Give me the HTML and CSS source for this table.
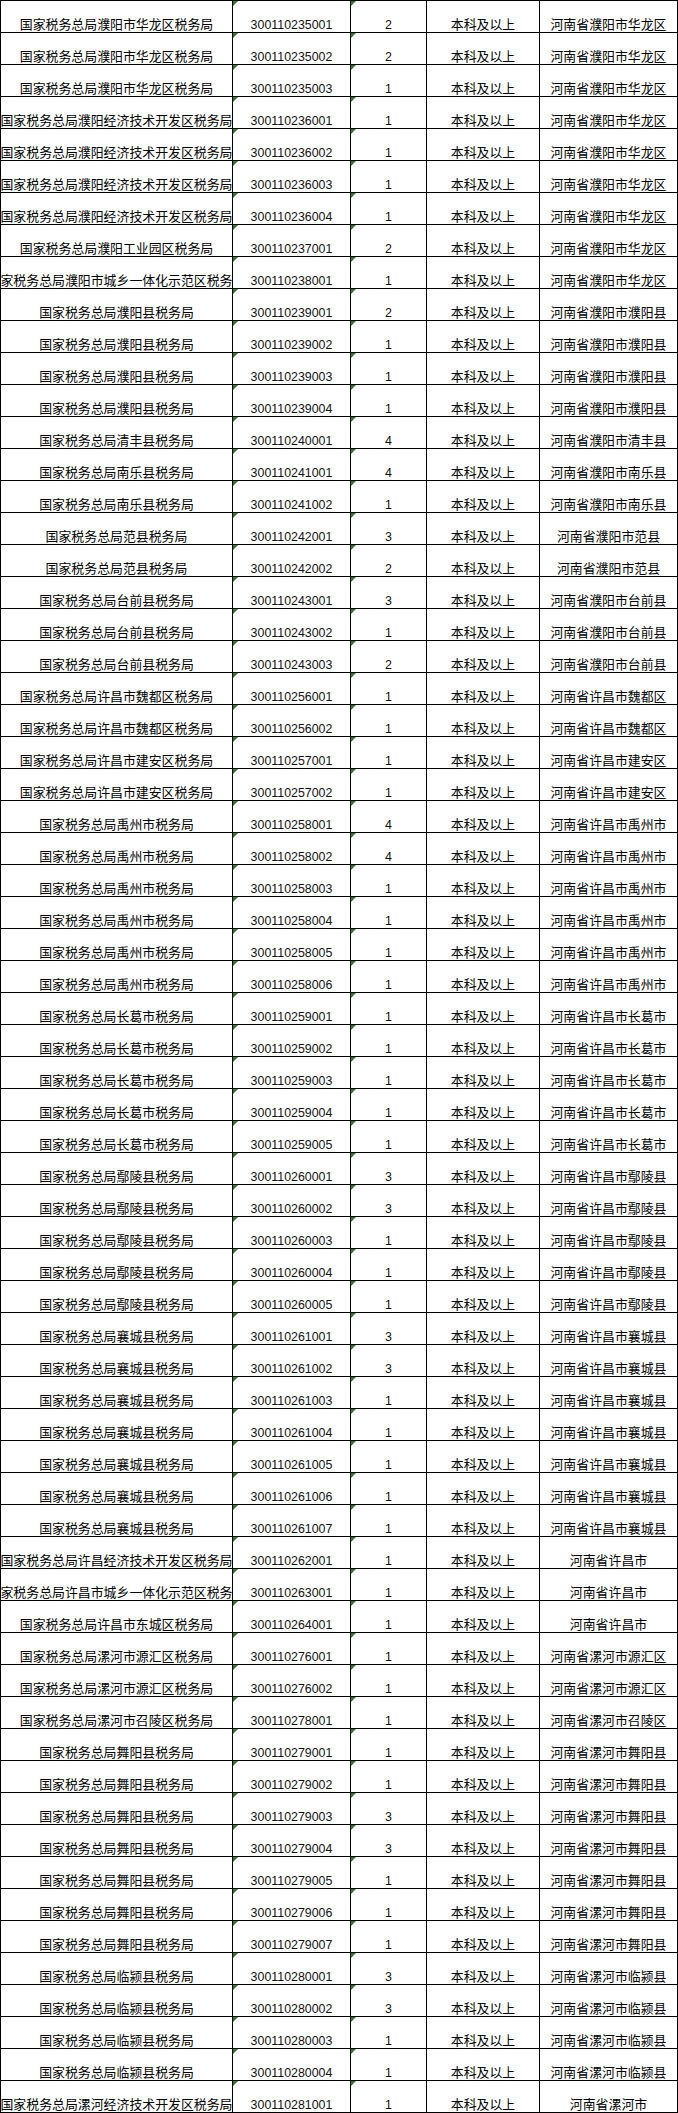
FILE: index.html
```html
<!DOCTYPE html>
<html lang="zh-CN">
<head>
<meta charset="utf-8">
<title>职位表</title>
<link rel="stylesheet" href="styles.css">
</head>
<body>
<div class="sheet">
<div class="c t">国家税务总局濮阳市华龙区税务局</div><div class="c n flag">300110235001</div><div class="c n flag">2</div><div class="c t">本科及以上</div><div class="c t">河南省濮阳市华龙区</div>
<div class="c t">国家税务总局濮阳市华龙区税务局</div><div class="c n flag">300110235002</div><div class="c n flag">2</div><div class="c t">本科及以上</div><div class="c t">河南省濮阳市华龙区</div>
<div class="c t">国家税务总局濮阳市华龙区税务局</div><div class="c n flag">300110235003</div><div class="c n flag">1</div><div class="c t">本科及以上</div><div class="c t">河南省濮阳市华龙区</div>
<div class="c t">国家税务总局濮阳经济技术开发区税务局</div><div class="c n flag">300110236001</div><div class="c n flag">1</div><div class="c t">本科及以上</div><div class="c t">河南省濮阳市华龙区</div>
<div class="c t">国家税务总局濮阳经济技术开发区税务局</div><div class="c n flag">300110236002</div><div class="c n flag">1</div><div class="c t">本科及以上</div><div class="c t">河南省濮阳市华龙区</div>
<div class="c t">国家税务总局濮阳经济技术开发区税务局</div><div class="c n flag">300110236003</div><div class="c n flag">1</div><div class="c t">本科及以上</div><div class="c t">河南省濮阳市华龙区</div>
<div class="c t">国家税务总局濮阳经济技术开发区税务局</div><div class="c n flag">300110236004</div><div class="c n flag">1</div><div class="c t">本科及以上</div><div class="c t">河南省濮阳市华龙区</div>
<div class="c t">国家税务总局濮阳工业园区税务局</div><div class="c n flag">300110237001</div><div class="c n flag">2</div><div class="c t">本科及以上</div><div class="c t">河南省濮阳市华龙区</div>
<div class="c t">国家税务总局濮阳市城乡一体化示范区税务局</div><div class="c n flag">300110238001</div><div class="c n flag">1</div><div class="c t">本科及以上</div><div class="c t">河南省濮阳市华龙区</div>
<div class="c t">国家税务总局濮阳县税务局</div><div class="c n flag">300110239001</div><div class="c n flag">2</div><div class="c t">本科及以上</div><div class="c t">河南省濮阳市濮阳县</div>
<div class="c t">国家税务总局濮阳县税务局</div><div class="c n flag">300110239002</div><div class="c n flag">1</div><div class="c t">本科及以上</div><div class="c t">河南省濮阳市濮阳县</div>
<div class="c t">国家税务总局濮阳县税务局</div><div class="c n flag">300110239003</div><div class="c n flag">1</div><div class="c t">本科及以上</div><div class="c t">河南省濮阳市濮阳县</div>
<div class="c t">国家税务总局濮阳县税务局</div><div class="c n flag">300110239004</div><div class="c n flag">1</div><div class="c t">本科及以上</div><div class="c t">河南省濮阳市濮阳县</div>
<div class="c t">国家税务总局清丰县税务局</div><div class="c n flag">300110240001</div><div class="c n flag">4</div><div class="c t">本科及以上</div><div class="c t">河南省濮阳市清丰县</div>
<div class="c t">国家税务总局南乐县税务局</div><div class="c n flag">300110241001</div><div class="c n flag">4</div><div class="c t">本科及以上</div><div class="c t">河南省濮阳市南乐县</div>
<div class="c t">国家税务总局南乐县税务局</div><div class="c n flag">300110241002</div><div class="c n flag">1</div><div class="c t">本科及以上</div><div class="c t">河南省濮阳市南乐县</div>
<div class="c t">国家税务总局范县税务局</div><div class="c n flag">300110242001</div><div class="c n flag">3</div><div class="c t">本科及以上</div><div class="c t">河南省濮阳市范县</div>
<div class="c t">国家税务总局范县税务局</div><div class="c n flag">300110242002</div><div class="c n flag">2</div><div class="c t">本科及以上</div><div class="c t">河南省濮阳市范县</div>
<div class="c t">国家税务总局台前县税务局</div><div class="c n flag">300110243001</div><div class="c n flag">3</div><div class="c t">本科及以上</div><div class="c t">河南省濮阳市台前县</div>
<div class="c t">国家税务总局台前县税务局</div><div class="c n flag">300110243002</div><div class="c n flag">1</div><div class="c t">本科及以上</div><div class="c t">河南省濮阳市台前县</div>
<div class="c t">国家税务总局台前县税务局</div><div class="c n flag">300110243003</div><div class="c n flag">2</div><div class="c t">本科及以上</div><div class="c t">河南省濮阳市台前县</div>
<div class="c t">国家税务总局许昌市魏都区税务局</div><div class="c n flag">300110256001</div><div class="c n flag">1</div><div class="c t">本科及以上</div><div class="c t">河南省许昌市魏都区</div>
<div class="c t">国家税务总局许昌市魏都区税务局</div><div class="c n flag">300110256002</div><div class="c n flag">1</div><div class="c t">本科及以上</div><div class="c t">河南省许昌市魏都区</div>
<div class="c t">国家税务总局许昌市建安区税务局</div><div class="c n flag">300110257001</div><div class="c n flag">1</div><div class="c t">本科及以上</div><div class="c t">河南省许昌市建安区</div>
<div class="c t">国家税务总局许昌市建安区税务局</div><div class="c n flag">300110257002</div><div class="c n flag">1</div><div class="c t">本科及以上</div><div class="c t">河南省许昌市建安区</div>
<div class="c t">国家税务总局禹州市税务局</div><div class="c n flag">300110258001</div><div class="c n flag">4</div><div class="c t">本科及以上</div><div class="c t">河南省许昌市禹州市</div>
<div class="c t">国家税务总局禹州市税务局</div><div class="c n flag">300110258002</div><div class="c n flag">4</div><div class="c t">本科及以上</div><div class="c t">河南省许昌市禹州市</div>
<div class="c t">国家税务总局禹州市税务局</div><div class="c n flag">300110258003</div><div class="c n flag">1</div><div class="c t">本科及以上</div><div class="c t">河南省许昌市禹州市</div>
<div class="c t">国家税务总局禹州市税务局</div><div class="c n flag">300110258004</div><div class="c n flag">1</div><div class="c t">本科及以上</div><div class="c t">河南省许昌市禹州市</div>
<div class="c t">国家税务总局禹州市税务局</div><div class="c n flag">300110258005</div><div class="c n flag">1</div><div class="c t">本科及以上</div><div class="c t">河南省许昌市禹州市</div>
<div class="c t">国家税务总局禹州市税务局</div><div class="c n flag">300110258006</div><div class="c n flag">1</div><div class="c t">本科及以上</div><div class="c t">河南省许昌市禹州市</div>
<div class="c t">国家税务总局长葛市税务局</div><div class="c n flag">300110259001</div><div class="c n flag">1</div><div class="c t">本科及以上</div><div class="c t">河南省许昌市长葛市</div>
<div class="c t">国家税务总局长葛市税务局</div><div class="c n flag">300110259002</div><div class="c n flag">1</div><div class="c t">本科及以上</div><div class="c t">河南省许昌市长葛市</div>
<div class="c t">国家税务总局长葛市税务局</div><div class="c n flag">300110259003</div><div class="c n flag">1</div><div class="c t">本科及以上</div><div class="c t">河南省许昌市长葛市</div>
<div class="c t">国家税务总局长葛市税务局</div><div class="c n flag">300110259004</div><div class="c n flag">1</div><div class="c t">本科及以上</div><div class="c t">河南省许昌市长葛市</div>
<div class="c t">国家税务总局长葛市税务局</div><div class="c n flag">300110259005</div><div class="c n flag">1</div><div class="c t">本科及以上</div><div class="c t">河南省许昌市长葛市</div>
<div class="c t">国家税务总局鄢陵县税务局</div><div class="c n flag">300110260001</div><div class="c n flag">3</div><div class="c t">本科及以上</div><div class="c t">河南省许昌市鄢陵县</div>
<div class="c t">国家税务总局鄢陵县税务局</div><div class="c n flag">300110260002</div><div class="c n flag">3</div><div class="c t">本科及以上</div><div class="c t">河南省许昌市鄢陵县</div>
<div class="c t">国家税务总局鄢陵县税务局</div><div class="c n flag">300110260003</div><div class="c n flag">1</div><div class="c t">本科及以上</div><div class="c t">河南省许昌市鄢陵县</div>
<div class="c t">国家税务总局鄢陵县税务局</div><div class="c n flag">300110260004</div><div class="c n flag">1</div><div class="c t">本科及以上</div><div class="c t">河南省许昌市鄢陵县</div>
<div class="c t">国家税务总局鄢陵县税务局</div><div class="c n flag">300110260005</div><div class="c n flag">1</div><div class="c t">本科及以上</div><div class="c t">河南省许昌市鄢陵县</div>
<div class="c t">国家税务总局襄城县税务局</div><div class="c n flag">300110261001</div><div class="c n flag">3</div><div class="c t">本科及以上</div><div class="c t">河南省许昌市襄城县</div>
<div class="c t">国家税务总局襄城县税务局</div><div class="c n flag">300110261002</div><div class="c n flag">3</div><div class="c t">本科及以上</div><div class="c t">河南省许昌市襄城县</div>
<div class="c t">国家税务总局襄城县税务局</div><div class="c n flag">300110261003</div><div class="c n flag">1</div><div class="c t">本科及以上</div><div class="c t">河南省许昌市襄城县</div>
<div class="c t">国家税务总局襄城县税务局</div><div class="c n flag">300110261004</div><div class="c n flag">1</div><div class="c t">本科及以上</div><div class="c t">河南省许昌市襄城县</div>
<div class="c t">国家税务总局襄城县税务局</div><div class="c n flag">300110261005</div><div class="c n flag">1</div><div class="c t">本科及以上</div><div class="c t">河南省许昌市襄城县</div>
<div class="c t">国家税务总局襄城县税务局</div><div class="c n flag">300110261006</div><div class="c n flag">1</div><div class="c t">本科及以上</div><div class="c t">河南省许昌市襄城县</div>
<div class="c t">国家税务总局襄城县税务局</div><div class="c n flag">300110261007</div><div class="c n flag">1</div><div class="c t">本科及以上</div><div class="c t">河南省许昌市襄城县</div>
<div class="c t">国家税务总局许昌经济技术开发区税务局</div><div class="c n flag">300110262001</div><div class="c n flag">1</div><div class="c t">本科及以上</div><div class="c t">河南省许昌市</div>
<div class="c t">国家税务总局许昌市城乡一体化示范区税务局</div><div class="c n flag">300110263001</div><div class="c n flag">1</div><div class="c t">本科及以上</div><div class="c t">河南省许昌市</div>
<div class="c t">国家税务总局许昌市东城区税务局</div><div class="c n flag">300110264001</div><div class="c n flag">1</div><div class="c t">本科及以上</div><div class="c t">河南省许昌市</div>
<div class="c t">国家税务总局漯河市源汇区税务局</div><div class="c n flag">300110276001</div><div class="c n flag">1</div><div class="c t">本科及以上</div><div class="c t">河南省漯河市源汇区</div>
<div class="c t">国家税务总局漯河市源汇区税务局</div><div class="c n flag">300110276002</div><div class="c n flag">1</div><div class="c t">本科及以上</div><div class="c t">河南省漯河市源汇区</div>
<div class="c t">国家税务总局漯河市召陵区税务局</div><div class="c n flag">300110278001</div><div class="c n flag">1</div><div class="c t">本科及以上</div><div class="c t">河南省漯河市召陵区</div>
<div class="c t">国家税务总局舞阳县税务局</div><div class="c n flag">300110279001</div><div class="c n flag">1</div><div class="c t">本科及以上</div><div class="c t">河南省漯河市舞阳县</div>
<div class="c t">国家税务总局舞阳县税务局</div><div class="c n flag">300110279002</div><div class="c n flag">1</div><div class="c t">本科及以上</div><div class="c t">河南省漯河市舞阳县</div>
<div class="c t">国家税务总局舞阳县税务局</div><div class="c n flag">300110279003</div><div class="c n flag">3</div><div class="c t">本科及以上</div><div class="c t">河南省漯河市舞阳县</div>
<div class="c t">国家税务总局舞阳县税务局</div><div class="c n flag">300110279004</div><div class="c n flag">3</div><div class="c t">本科及以上</div><div class="c t">河南省漯河市舞阳县</div>
<div class="c t">国家税务总局舞阳县税务局</div><div class="c n flag">300110279005</div><div class="c n flag">1</div><div class="c t">本科及以上</div><div class="c t">河南省漯河市舞阳县</div>
<div class="c t">国家税务总局舞阳县税务局</div><div class="c n flag">300110279006</div><div class="c n flag">1</div><div class="c t">本科及以上</div><div class="c t">河南省漯河市舞阳县</div>
<div class="c t">国家税务总局舞阳县税务局</div><div class="c n flag">300110279007</div><div class="c n flag">1</div><div class="c t">本科及以上</div><div class="c t">河南省漯河市舞阳县</div>
<div class="c t">国家税务总局临颍县税务局</div><div class="c n flag">300110280001</div><div class="c n flag">3</div><div class="c t">本科及以上</div><div class="c t">河南省漯河市临颍县</div>
<div class="c t">国家税务总局临颍县税务局</div><div class="c n flag">300110280002</div><div class="c n flag">3</div><div class="c t">本科及以上</div><div class="c t">河南省漯河市临颍县</div>
<div class="c t">国家税务总局临颍县税务局</div><div class="c n flag">300110280003</div><div class="c n flag">1</div><div class="c t">本科及以上</div><div class="c t">河南省漯河市临颍县</div>
<div class="c t">国家税务总局临颍县税务局</div><div class="c n flag">300110280004</div><div class="c n flag">1</div><div class="c t">本科及以上</div><div class="c t">河南省漯河市临颍县</div>
<div class="c t">国家税务总局漯河经济技术开发区税务局</div><div class="c n flag">300110281001</div><div class="c n flag">1</div><div class="c t">本科及以上</div><div class="c t">河南省漯河市</div>
</div>
</body>
</html>
```

FILE: styles.css
```css
html, body {
  margin: 0;
  padding: 0;
  background: #ffffff;
}

.sheet {
  display: grid;
  grid-template-columns: 232px 118px 76px 113px 138px;
  grid-auto-rows: 32px;
  width: max-content;
  border-left: 1px solid #000;
  border-top: 1px solid #000;
  color: #000;
}

.c {
  position: relative;
  box-sizing: border-box;
  display: flex;
  align-items: flex-end;
  justify-content: center;
  overflow: hidden;
  white-space: nowrap;
  border-right: 1px solid #000;
  border-bottom: 1px solid #000;
}

.t {
  font-family: "Noto Sans CJK SC", sans-serif;
  font-size: 12.9px;
  line-height: 14px;
  padding-bottom: 1px;
}

.n {
  font-family: "Liberation Sans", Arial, sans-serif;
  font-size: 12.4px;
  line-height: 14px;
  padding-bottom: 0;
  color: #111;
}

.flag::before {
  content: "";
  position: absolute;
  top: 0;
  left: 0;
  width: 0;
  height: 0;
  border-top: 5px solid #2b7a2b;
  border-right: 5px solid transparent;
}
```
